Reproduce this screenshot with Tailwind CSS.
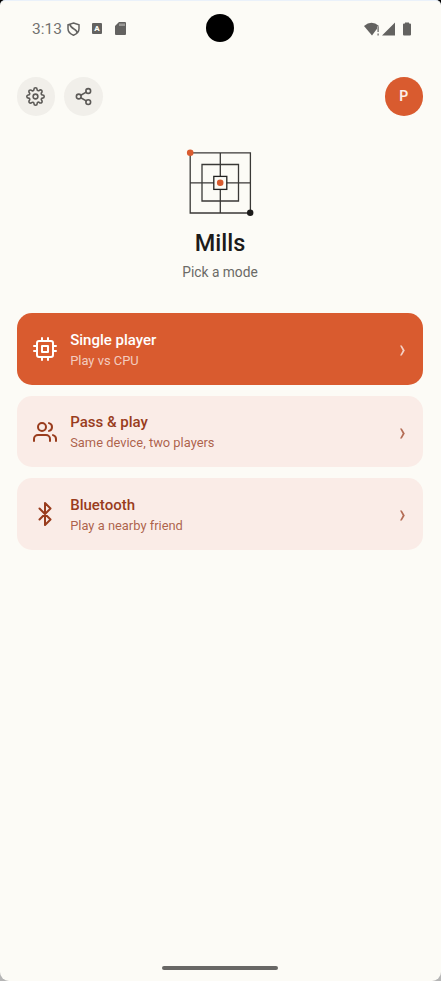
<!DOCTYPE html>
<html lang="en">
<head>
<meta charset="utf-8">
<title>Mills</title>
<script src="https://cdn.jsdelivr.net/npm/@tailwindcss/browser@4"></script>
</head>
<body class="h-[981px] w-[441px] overflow-hidden bg-[linear-gradient(#000_50%,#b5b5b5_50%)] font-[Roboto,sans-serif]">
<div class="flex h-full flex-col rounded-t-[5px] rounded-b-[9px] border-t border-[#eaf1fa] bg-[#fcfbf6]">
  <header class="relative flex h-[55px] items-center pr-[30.500px] pl-8 text-[#636260]">
    <span class="w-[30px] text-[15.500px] leading-5 whitespace-nowrap text-[#737270]">3:13</span>
    <svg class="ml-[5px] h-[14px] w-[13px]" viewBox="0 0 13 14" fill="none" stroke="currentColor" stroke-width="1.5"><path d="M6.500 1 12 2.800v4c0 3-2.300 5.200-5.500 6.400C3.300 12 1 9.800 1 6.800v-4zM3 2.500C3.500 5 5 6 7 7s3 2.500 3 4"/></svg>
    <div class="ml-3 flex h-[11px] w-[10px] items-center justify-center rounded-[1px] bg-[#636260] text-[8px] leading-none font-black text-[#fcfbf6]">A</div>
    <svg class="ml-[13px] h-[13px] w-[11px]" viewBox="0 0 11 13"><path fill="currentColor" d="M4 0h6q1 0 1 1v11q0 1-1 1H1q-1 0-1-1V4z"/><path stroke="#d2d0cc" stroke-width="1" d="M5 1.500v2.500M7 1.500v2.500M9 1.500v2.500"/></svg>
    <div class="absolute top-[13px] left-[206px] size-7 rounded-full bg-black"></div>
    <svg class="ml-auto h-[14px] w-[47px]" viewBox="0 0 47 14" fill="currentColor"><path d="M0 4Q7.500-2.500 15 4L8 13.500z"/><path d="M13 4.500h3v9.500h-3z" fill="#fcfbf6"/><path d="M13.500 4.500h1.200v5.500h-1.200zM13.500 11.500h1.200v2h-1.200zM18 13.500 31 .5v13zM41 .5h4V1.500h1q1 0 1 1v10q0 1-1 1h-6q-1 0-1-1v-10q0-1 1-1h1z"/></svg>
  </header>

  <nav class="mt-[21.500px] mb-[.5px] flex h-[38px] items-center gap-[9px] pr-[18px] pl-[16.500px] text-[#5c5a57]">
    <button class="flex size-[38.500px] items-center justify-center rounded-full bg-[#f1efea]" aria-label="Settings">
      <svg class="size-[19px]" viewBox="0 0 24 24" fill="none" stroke="currentColor" stroke-width="2" stroke-linecap="round" stroke-linejoin="round"><circle cx="12" cy="12" r="3"/><path d="M19.4 15a1.65 1.65 0 0 0 .33 1.82l.06.06a2 2 0 0 1 0 2.83 2 2 0 0 1-2.83 0l-.06-.06a1.65 1.65 0 0 0-1.82-.33 1.65 1.65 0 0 0-1 1.51V21a2 2 0 0 1-2 2 2 2 0 0 1-2-2v-.09A1.65 1.65 0 0 0 9 19.4a1.65 1.65 0 0 0-1.82.33l-.06.06a2 2 0 0 1-2.83 0 2 2 0 0 1 0-2.83l.06-.06a1.65 1.65 0 0 0 .33-1.82 1.65 1.65 0 0 0-1.51-1H3a2 2 0 0 1-2-2 2 2 0 0 1 2-2h.09A1.65 1.65 0 0 0 4.6 9a1.65 1.65 0 0 0-.33-1.82l-.06-.06a2 2 0 0 1 0-2.83 2 2 0 0 1 2.83 0l.06.06a1.65 1.65 0 0 0 1.82.33H9a1.65 1.65 0 0 0 1-1.51V3a2 2 0 0 1 2-2 2 2 0 0 1 2 2v.09a1.65 1.65 0 0 0 1 1.51 1.65 1.65 0 0 0 1.82-.33l.06-.06a2 2 0 0 1 2.83 0 2 2 0 0 1 0 2.83l-.06.06a1.65 1.65 0 0 0-.33 1.82V9a1.65 1.65 0 0 0 1.51 1H21a2 2 0 0 1 2 2 2 2 0 0 1-2 2h-.09a1.65 1.65 0 0 0-1.51 1z"/></svg>
    </button>
    <button class="flex size-[38.500px] items-center justify-center rounded-full bg-[#f1efea]" aria-label="Share">
      <svg class="size-[19px]" viewBox="0 0 24 24" fill="none" stroke="currentColor" stroke-width="2" stroke-linecap="round"><circle cx="18" cy="5" r="3"/><circle cx="6" cy="12" r="3"/><circle cx="18" cy="19" r="3"/><path d="m8.590 13.510 6.830 3.980M15.410 6.510l-6.820 3.980"/></svg>
    </button>
    <div class="ml-auto flex size-[38.500px] items-center justify-center rounded-full bg-[#d95b2f] text-[14px] font-semibold text-[#fbeee9]">P</div>
  </nav>

  <section class="mt-[32px] flex flex-col items-center pr-px">
    <svg class="h-[70px] w-[70px]" viewBox="185 148 70 70" fill="none" stroke="#3a3937" stroke-width="1.3"><path d="M190.200 152.800h60.200v60.200h-60.200zM202 164.500h36.500v36.500H202zM220.300 153v60M190 182.800h60.500"/><rect x="213.800" y="176.400" width="13" height="13" fill="#fcfbf6" stroke="#222120"/><g stroke="none"><circle cx="220.200" cy="182.800" r="3.300" fill="#d95b2f"/><circle cx="190.200" cy="152.800" r="3.300" fill="#d95b2f"/><circle cx="250.200" cy="212.700" r="3.200" fill="#1c1b1a"/></g></svg>
    <h1 class="mt-[9px] text-[23.500px] leading-8 font-medium text-[#1c1b1a]">Mills</h1>
    <p class="mt-[3px] text-[13.750px] leading-5 text-[#6b6a66]">Pick a mode</p>
  </section>

  <main class="mt-[31.300px] flex flex-col gap-[11px] pr-[18px] pl-[16.700px]">
    <button class="flex h-[71.500px] items-center rounded-[15px] bg-[#d95b2f] pr-[17px] pl-[16.500px] text-left text-white">
      <svg class="size-6" viewBox="0 0 24 24" fill="none" stroke="currentColor" stroke-width="2" stroke-linecap="round" stroke-linejoin="round"><rect x="4" y="4" width="16" height="16" rx="2"/><path d="M9 9h6v6H9zM9 1v3M15 1v3M9 20v3M15 20v3M20 9h3M20 14h3M1 9h3M1 14h3"/></svg>
      <span class="ml-[13px] flex flex-col pt-[2px]"><span class="text-[15px] leading-5 font-medium">Single player</span><span class="mt-px text-[12.900px] leading-5 text-white/70">Play vs CPU</span></span>
      <svg class="mt-[3px] ml-auto h-[11px] w-[7px]" viewBox="0 0 7 11" fill="currentColor" opacity=".72"><path d="M1 .5H2.800L5.800 5.500 2.800 10.500H1L3.700 5.500z"/></svg>
    </button>
    <button class="flex h-[71.500px] items-center rounded-[15px] bg-[#faece7] pr-[17px] pl-[16.500px] text-left text-[#993c1d]">
      <svg class="size-6" viewBox="0 0 24 24" fill="none" stroke="currentColor" stroke-width="2" stroke-linecap="round" stroke-linejoin="round"><path d="M17 21v-2a4 4 0 0 0-4-4H5a4 4 0 0 0-4 4v2"/><circle cx="9" cy="7" r="4"/><path d="M23 21v-2a4 4 0 0 0-3-3.870M16 3.130a4 4 0 0 1 0 7.750"/></svg>
      <span class="ml-[13px] flex flex-col pt-[2px]"><span class="text-[15px] leading-5 font-medium">Pass &amp; play</span><span class="mt-px text-[12.900px] leading-5 text-[#993c1d]/80">Same device, two players</span></span>
      <svg class="mt-[3px] ml-auto h-[11px] w-[7px]" viewBox="0 0 7 11" fill="currentColor" opacity=".72"><path d="M1 .5H2.800L5.800 5.500 2.800 10.500H1L3.700 5.500z"/></svg>
    </button>
    <button class="flex h-[71.500px] items-center rounded-[15px] bg-[#faece7] pr-[17px] pl-[16.500px] text-left text-[#993c1d]">
      <svg class="size-6" viewBox="0 0 24 24" fill="none" stroke="currentColor" stroke-width="2" stroke-linecap="round" stroke-linejoin="round"><path d="m6.500 6.500 11 11L12 23V1l5.500 5.500-11 11"/></svg>
      <span class="ml-[13px] flex flex-col pt-[2px]"><span class="text-[15px] leading-5 font-medium">Bluetooth</span><span class="mt-px text-[12.900px] leading-5 text-[#993c1d]/80">Play a nearby friend</span></span>
      <svg class="mt-[3px] ml-auto h-[11px] w-[7px]" viewBox="0 0 7 11" fill="currentColor" opacity=".72"><path d="M1 .5H2.800L5.800 5.500 2.800 10.500H1L3.700 5.500z"/></svg>
    </button>
  </main>
  <div class="mt-auto mr-px mb-[11px] h-1 w-[116px] self-center rounded-full bg-[#686765]"></div>
</div>
</body>
</html>
